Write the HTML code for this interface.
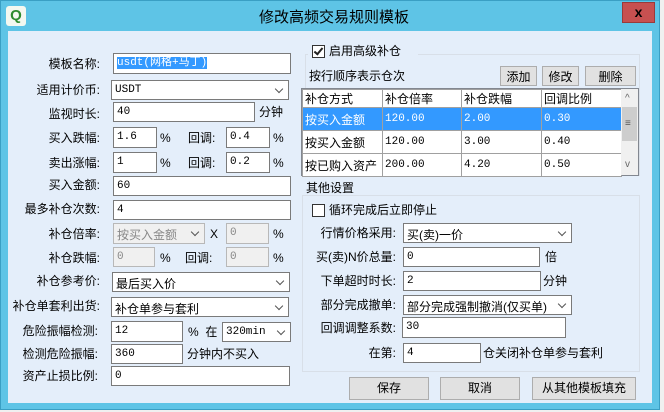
<!DOCTYPE html>
<html><head><meta charset="utf-8"><style>
*{margin:0;padding:0;box-sizing:border-box}
body{width:664px;height:412px;overflow:hidden;background:#f0f0f0;font:12px "Liberation Sans","Noto Sans CJK SC",sans-serif;color:#000;position:relative}
#win{position:absolute;left:0;top:0;width:660px;height:410px;background:#5ec4e6;border:1px solid #3a9fc4}
#client{position:absolute;left:8px;top:31px;width:644px;height:372px;background:#e4eefa}
.a{position:absolute;white-space:nowrap;line-height:14px}
.l{position:absolute;text-align:right;white-space:nowrap;line-height:14px}
.i{position:absolute;background:#fff;border:1px solid #7a7a7a;font:11px "Liberation Mono","Noto Sans CJK SC",monospace;padding:2px 3px;line-height:14px;overflow:hidden;white-space:nowrap}
.d{background:#f0f0f0;border-color:#b8b8b8;color:#888}
.s:after{content:"";position:absolute;right:6px;top:5px;width:5px;height:5px;border-right:1.5px solid #555;border-bottom:1.5px solid #555;transform:rotate(45deg)}
.b{position:absolute;background:#e1e1e1;border:1px solid #adadad;text-align:center;line-height:20px}
.cb{position:absolute;width:13px;height:13px;border:1px solid #333;background:#fff}
table{border-collapse:collapse;position:absolute;left:302px;top:89px;width:320px;font-size:12px}
td{border:1px solid #a0a0a0;height:23px;padding:0 2px;white-space:nowrap;font:11px "Liberation Mono","Noto Sans CJK SC",monospace;background:#fff}
tr.h td{height:17px;font:12px "Liberation Sans","Noto Sans CJK SC",sans-serif}
tr.sel td{background:#3399ff;color:#fff}
.cn{font:12px "Liberation Sans","Noto Sans CJK SC",sans-serif!important}
td.cn{font-size:12px}
</style></head><body>
<div id="win">
<div style="position:absolute;left:5px;top:5px;width:20px;height:20px;background:#f4f8f0;border-radius:3px;color:#2e8b2e;font:bold 15px 'Liberation Sans';text-align:center;line-height:20px">Q</div>
<div class="a" style="left:258px;top:8px;font-size:15px;line-height:18px">修改高频交易规则模板</div>
<div style="position:absolute;left:621px;top:1px;width:33px;height:21px;background:#c75050;border:1px solid #9a3a3a;text-align:center;font:bold 14px 'Liberation Sans';line-height:18px">x</div>
</div>
<div id="client" style="left:8px"></div>
<div class="l" style="right:564px;top:57px">模板名称:</div>
<div class="i" style="left:113px;top:53px;width:178px;height:21px"><span style="background:#3399ff;color:#fff">usdt(网格+马丁)</span></div>
<div class="l" style="right:564px;top:83px">适用计价币:</div>
<div class="i s" style="left:111px;top:80px;width:178px;height:20px">USDT</div>
<div class="l" style="right:564px;top:107px">监视时长:</div>
<div class="i" style="left:113px;top:102px;width:142px;height:20px">40</div>
<div class="a" style="left:259px;top:105px">分钟</div>
<div class="l" style="right:564px;top:131px">买入跌幅:</div>
<div class="i" style="left:113px;top:127px;width:44px;height:21px">1.6</div><div class="a" style="left:160px;top:131px">%</div>
<div class="a" style="left:188px;top:131px">回调:</div>
<div class="i" style="left:226px;top:127px;width:44px;height:21px">0.4</div><div class="a" style="left:273px;top:131px">%</div>
<div class="l" style="right:564px;top:156px">卖出涨幅:</div>
<div class="i" style="left:113px;top:152px;width:44px;height:21px">1</div><div class="a" style="left:160px;top:156px">%</div>
<div class="a" style="left:188px;top:156px">回调:</div>
<div class="i" style="left:226px;top:152px;width:44px;height:21px">0.2</div><div class="a" style="left:273px;top:156px">%</div>
<div class="l" style="right:564px;top:178px">买入金额:</div>
<div class="i" style="left:113px;top:176px;width:178px;height:20px">60</div>
<div class="l" style="right:564px;top:202px">最多补仓次数:</div>
<div class="i" style="left:113px;top:200px;width:178px;height:20px">4</div>
<div class="l" style="right:564px;top:227px">补仓倍率:</div>
<div class="i d s cn" style="left:113px;top:223px;width:92px;height:21px">按买入金额</div>
<div class="a" style="left:210px;top:227px">X</div>
<div class="i d" style="left:226px;top:223px;width:43px;height:21px">0</div><div class="a" style="left:273px;top:227px">%</div>
<div class="l" style="right:564px;top:251px">补仓跌幅:</div>
<div class="i d" style="left:113px;top:247px;width:42px;height:20px">0</div><div class="a" style="left:160px;top:251px">%</div>
<div class="a" style="left:185px;top:251px">回调:</div>
<div class="i d" style="left:226px;top:247px;width:43px;height:20px">0</div><div class="a" style="left:273px;top:251px">%</div>
<div class="l" style="right:564px;top:274px">补仓参考价:</div>
<div class="i s cn" style="left:112px;top:272px;width:178px;height:20px">最后买入价</div>
<div class="l" style="right:564px;top:299px">补仓单套利出货:</div>
<div class="i s cn" style="left:111px;top:297px;width:178px;height:20px">补仓单参与套利</div>
<div class="l" style="right:566px;top:324px">危险振幅检测:</div>
<div class="i" style="left:111px;top:321px;width:72px;height:21px">12</div>
<div class="a" style="left:188px;top:325px">%&nbsp; 在</div>
<div class="i s" style="left:222px;top:322px;width:69px;height:20px">320min</div>
<div class="l" style="right:566px;top:347px">检测危险振幅:</div>
<div class="i" style="left:111px;top:344px;width:72px;height:20px">360</div>
<div class="a" style="left:187px;top:347px">分钟内不买入</div>
<div class="l" style="right:566px;top:369px">资产止损比例:</div>
<div class="i" style="left:111px;top:366px;width:179px;height:20px">0</div>
<div style="position:absolute;left:305px;top:54px;width:335px;height:122px;border:1px solid #d8dfe8;border-bottom:none"></div>
<div style="position:absolute;left:308px;top:40px;width:110px;height:16px;background:#e4eefa"></div>
<div class="cb" style="left:312px;top:45px"><span style="position:absolute;left:3px;top:0px;width:5px;height:9px;border-right:2px solid #222;border-bottom:2px solid #222;transform:rotate(40deg)"></span></div>
<div class="a" style="left:329px;top:44px">启用高级补仓</div>
<div class="a" style="left:309px;top:69px">按行顺序表示仓次</div>
<div class="b" style="left:500px;top:66px;width:37px;height:20px">添加</div>
<div class="b" style="left:542px;top:66px;width:37px;height:20px">修改</div>
<div class="b" style="left:585px;top:66px;width:51px;height:20px">删除</div>
<div style="position:absolute;left:301px;top:88px;width:338px;height:88px;border:1px solid #828790;background:#fff"></div>
<table>
<tr class="h"><td style="width:80px">补仓方式</td><td style="width:79px">补仓倍率</td><td style="width:80px">补仓跌幅</td><td>回调比例</td></tr>
<tr class="sel"><td class="cn">按买入金额</td><td>120.00</td><td>2.00</td><td>0.30</td></tr>
<tr><td class="cn">按买入金额</td><td>120.00</td><td>3.00</td><td>0.40</td></tr>
<tr><td class="cn">按已购入资产</td><td>200.00</td><td>4.20</td><td>0.50</td></tr>
</table>
<div style="position:absolute;left:621px;top:89px;width:17px;height:86px;background:#f0f0f0"></div>
<div class="a" style="left:625px;top:92px;font-size:10px;color:#666">^</div>
<div style="position:absolute;left:622px;top:107px;width:15px;height:34px;background:#cdcdcd"></div>
<div class="a" style="left:625px;top:117px;font-size:10px;color:#555">≡</div>
<div class="a" style="left:625px;top:158px;font-size:10px;color:#666">v</div>
<div class="a" style="left:306px;top:181px">其他设置</div>
<div style="position:absolute;left:302px;top:195px;width:338px;height:177px;border:1px solid #d8dfe8"></div>
<div class="cb" style="left:312px;top:204px"></div>
<div class="a" style="left:329px;top:203px">循环完成后立即停止</div>
<div class="l" style="right:268px;top:226px">行情价格采用:</div>
<div class="i s cn" style="left:403px;top:223px;width:169px;height:20px">买(卖)一价</div>
<div class="l" style="right:268px;top:250px">买(卖)N价总量:</div>
<div class="i" style="left:403px;top:247px;width:137px;height:20px">0</div><div class="a" style="left:545px;top:250px">倍</div>
<div class="l" style="right:268px;top:274px">下单超时时长:</div>
<div class="i" style="left:403px;top:271px;width:138px;height:20px">2</div><div class="a" style="left:543px;top:274px">分钟</div>
<div class="l" style="right:268px;top:298px">部分完成撤单:</div>
<div class="i s cn" style="left:403px;top:295px;width:169px;height:20px">部分完成强制撤消(仅买单)</div>
<div class="l" style="right:268px;top:321px">回调调整系数:</div>
<div class="i" style="left:402px;top:317px;width:164px;height:21px">30</div>
<div class="l" style="right:268px;top:346px">在第:</div>
<div class="i" style="left:403px;top:343px;width:78px;height:20px">4</div>
<div class="a" style="left:483px;top:346px">仓关闭补仓单参与套利</div>
<div class="b" style="left:349px;top:377px;width:80px;height:23px">保存</div>
<div class="b" style="left:440px;top:377px;width:80px;height:23px">取消</div>
<div class="b" style="left:532px;top:377px;width:104px;height:23px">从其他模板填充</div>
</body></html>
